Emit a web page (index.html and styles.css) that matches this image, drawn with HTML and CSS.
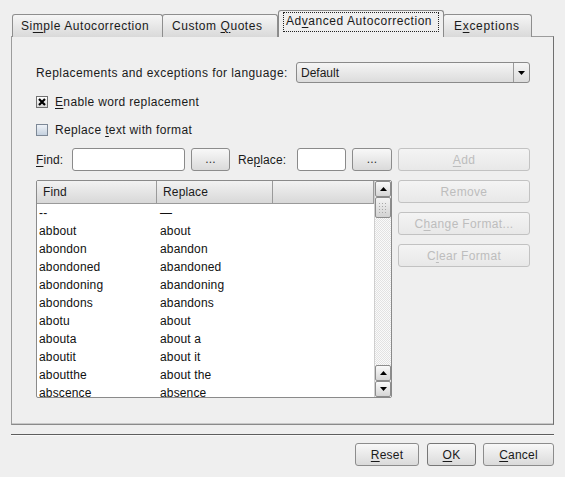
FILE: index.html
```html
<!DOCTYPE html>
<html>
<head>
<meta charset="utf-8">
<link rel="stylesheet" href="styles.css">
</head>
<body>
<div class="dialog">
  <div class="tabs">
    <div class="tab t1"><span>Si<u>m</u>ple Autocorrection</span></div>
    <div class="tab t2"><span>Custom <u>Q</u>uotes</span></div>
    <div class="tab active t3"><span class="focus">Ad<u>v</u>anced Autocorrection</span></div>
    <div class="tab t4"><span>E<u>x</u>ceptions</span></div>
  </div>
  <div class="panel">
    <div class="lang-row">
      <span class="lang-label">Replacements and exceptions for language:</span>
      <div class="combo">
        <span class="combo-text">Default</span>
        <span class="combo-arrow"><svg width="7" height="4" viewBox="0 0 7 4"><path d="M0 0H7L3.5 4Z" fill="#000"/></svg></span>
      </div>
    </div>
    <div class="check">
      <span class="box checked"><svg width="8" height="8" viewBox="0 0 8 8"><path d="M1 1L7 7M7 1L1 7" stroke="#000" stroke-width="2.2"/></svg></span>
      <span class="check-label"><u>E</u>nable word replacement</span>
    </div>
    <div class="check">
      <span class="box"></span>
      <span class="check-label">Replace <u>t</u>ext with format</span>
    </div>
    <div class="grid">
      <div class="find-row">
        <span class="lbl-find"><u>F</u>ind:</span>
        <span class="input in-find"></span>
        <span class="btn dots b1">...</span>
        <span class="lbl-rep">Re<u>p</u>lace:</span>
        <span class="input in-rep"></span>
        <span class="btn dots b2">...</span>
      </div>
      <div class="btn disabled"><span><u>A</u>dd</span></div>
      <div class="list">
        <div class="list-main">
          <div class="head">
            <div class="hc c1">Find</div>
            <div class="hc c2">Replace</div>
            <div class="hc c3"></div>
          </div>
          <div class="rows">
            <div class="row"><span class="c1">--</span><span class="c2">—</span></div>
            <div class="row"><span class="c1">abbout</span><span class="c2">about</span></div>
            <div class="row"><span class="c1">abondon</span><span class="c2">abandon</span></div>
            <div class="row"><span class="c1">abondoned</span><span class="c2">abandoned</span></div>
            <div class="row"><span class="c1">abondoning</span><span class="c2">abandoning</span></div>
            <div class="row"><span class="c1">abondons</span><span class="c2">abandons</span></div>
            <div class="row"><span class="c1">abotu</span><span class="c2">about</span></div>
            <div class="row"><span class="c1">abouta</span><span class="c2">about a</span></div>
            <div class="row"><span class="c1">aboutit</span><span class="c2">about it</span></div>
            <div class="row"><span class="c1">aboutthe</span><span class="c2">about the</span></div>
            <div class="row"><span class="c1">abscence</span><span class="c2">absence</span></div>
          </div>
        </div>
        <div class="scroll">
          <div class="sb-btn"><svg width="7" height="4" viewBox="0 0 7 4"><path d="M3.5 0L7 4H0Z" fill="#000"/></svg></div>
          <div class="sb-thumb"><span class="grip"></span></div>
          <div class="sb-track"></div>
          <div class="sb-btn"><svg width="7" height="4" viewBox="0 0 7 4"><path d="M3.5 0L7 4H0Z" fill="#000"/></svg></div>
          <div class="sb-btn"><svg width="7" height="4" viewBox="0 0 7 4"><path d="M0 0H7L3.5 4Z" fill="#000"/></svg></div>
        </div>
      </div>
      <div class="side">
        <div class="btn disabled"><span>Remove</span></div>
        <div class="btn disabled"><span>C<u>h</u>ange Format...</span></div>
        <div class="btn disabled"><span>C<u>l</u>ear Format</span></div>
      </div>
    </div>
  </div>
  <div class="sep"></div>
  <div class="footer">
    <div class="btn f-reset"><span><u>R</u>eset</span></div>
    <div class="btn f-ok default"><span><u>O</u>K</span></div>
    <div class="btn f-cancel"><span><u>C</u>ancel</span></div>
  </div>
</div>
</body>
</html>
```

FILE: styles.css
```css
* { box-sizing: border-box; }
html, body {
  margin: 0;
  background: #efefef;
}
body {
  width: 565px;
  height: 477px;
  overflow: hidden;
  font-family: "Liberation Sans", Arial, sans-serif;
  font-size: 12px;
  color: #1a1a1a;
  letter-spacing: 0.3px;
}
u { text-decoration: underline; text-underline-offset: 2px; }

.dialog {
  padding: 10px 11px 0 11px;
}

/* Tabs */
.tabs {
  display: flex;
  align-items: flex-end;
  height: 27px;
  padding-left: 1px;
}
.tab {
  height: 23px;
  border: 1px solid #8e8e8e;
  border-bottom: none;
  border-radius: 3px 3px 0 0;
  background: linear-gradient(#f6f6f6, #d9d9d9);
  display: flex;
  align-items: center;
  padding: 0 0 1px 8px;
  white-space: nowrap;
  letter-spacing: 0.55px;
}
.t1 { width: 151px; }
.t2 { width: 116px; margin-left: -1px; padding-left: 9px; }
.t3 { width: 166px; }
.t4 { width: 89px; margin-left: -1px; padding-left: 10px; letter-spacing: 0.7px; }
.tab.active {
  height: 27px;
  background: #efefef;
  position: relative;
  z-index: 1;
  padding: 0 0 4px 4px;
  border-color: #8a8a8a;
}
.focus {
  width: 156px;
  border: 1px dotted #222;
  padding: 2px 2px 3px 2px;
  line-height: 13px;
}

/* Panel */
.panel {
  margin-top: -1px;
  height: 389px;
  border: 1px solid #9c9c9c;
  border-right-color: #6f6f6f;
  border-bottom-color: #8a8a8a;
  box-shadow: inset 0 -1px 0 #c8c8c8;
  padding: 25px 23px 0 24px;
}
.lang-row {
  display: flex;
  align-items: center;
  height: 21px;
  margin-bottom: 5px;
}
.lang-label { letter-spacing: 0.43px; }
.combo {
  margin-left: auto;
  width: 234px;
  height: 21px;
  border: 1px solid #8a8a8a;
  border-radius: 3px;
  background: linear-gradient(#f5f5f5, #dcdcdc);
  display: flex;
  align-items: center;
  letter-spacing: 0;
}
.combo-text {
  flex: 1;
  padding-left: 4px;
}
.combo-arrow {
  width: 16px;
  height: 19px;
  border-left: 1px solid #9a9a9a;
  display: flex;
  align-items: center;
  justify-content: center;
}

.check {
  display: flex;
  align-items: center;
  height: 28px;
}
.check-label { letter-spacing: 0.35px; }
.box {
  width: 12px;
  height: 12px;
  border: 1px solid #7d8896;
  background: linear-gradient(#eef2f7, #c5d1df);
  margin-right: 7px;
  display: flex;
  align-items: center;
  justify-content: center;
}
.box.checked {
  border-color: #707070;
  background: linear-gradient(#ffffff, #d8d8d8);
}

/* grid */
.grid {
  margin-top: 4px;
  display: grid;
  grid-template-columns: 356px 132px;
  column-gap: 6px;
  row-gap: 9px;
  grid-template-rows: 23px 218px;
}
.find-row {
  display: flex;
  align-items: center;
  letter-spacing: 0.1px;
}
.lbl-find { width: 36px; }
.input {
  height: 23px;
  border: 1px solid #8a8a8a;
  border-radius: 3px;
  background: #fff;
}
.in-find { width: 113px; }
.in-rep { width: 49px; }
.b1 { width: 39px; margin-left: 6px; }
.b2 { width: 40px; margin-left: 6px; }
.lbl-rep { width: 59px; margin-left: 8px; }

.btn {
  height: 23px;
  border: 1px solid #8c8c8c;
  border-radius: 3px;
  background: linear-gradient(#f8f8f8, #dadada);
  display: flex;
  align-items: center;
  justify-content: center;
  color: #1a1a1a;
  letter-spacing: 0.2px;
}
.btn.dots { padding-bottom: 2px; color: #333; }
.btn.disabled {
  border-color: #c2c2c2;
  background: linear-gradient(#f4f4f4, #e8e8e8);
  color: #bdbdbd;
  letter-spacing: 0.35px;
}

/* list */
.list {
  border: 1px solid #8a8a8a;
  border-radius: 2px;
  background: #fff;
  display: flex;
  overflow: hidden;
  letter-spacing: 0.15px;
}
.list-main {
  flex: 1;
  overflow: hidden;
}
.head {
  display: flex;
  height: 23px;
  background: linear-gradient(#f2f2f2, #d8d8d8);
  border-bottom: 1px solid #9a9a9a;
}
.hc {
  display: flex;
  align-items: center;
  padding-left: 6px;
  border-right: 1px solid #9a9a9a;
}
.head .c1 { width: 120px; }
.head .c2 { width: 116px; }
.head .c3 { flex: 1; }
.row {
  display: flex;
  height: 18px;
  align-items: center;
  color: #111;
  white-space: nowrap;
}
.row .c1 { width: 120px; padding-left: 2px; }
.row .c2 { padding-left: 3px; }

.scroll {
  width: 17px;
  display: flex;
  flex-direction: column;
  border-left: 1px solid #cfcfcf;
  background: #efefef;
}
.sb-btn {
  height: 16px;
  border: 1px solid #8c8c8c;
  border-radius: 2px;
  background: linear-gradient(#fafafa, #d6d6d6);
  display: flex;
  align-items: center;
  justify-content: center;
}
.sb-thumb {
  height: 21px;
  border: 1px solid #8c8c8c;
  border-radius: 2px;
  background: linear-gradient(#f4f4f4, #d2d2d2);
  display: flex;
  align-items: center;
  justify-content: center;
}
.grip {
  width: 10px;
  height: 11px;
  background-image: radial-gradient(circle, #a8a8a8 0.7px, transparent 0.8px);
  background-size: 3px 3px;
}
.sb-track {
  flex: 1;
  background-color: #f4f4f4;
  background-image: repeating-conic-gradient(#e2e2e2 0 25%, #fafafa 0 50%);
  background-size: 2px 2px;
}

.side {
  display: flex;
  flex-direction: column;
  gap: 9px;
}

/* footer */
.sep {
  margin-top: 9px;
  height: 2px;
  border-top: 1px solid #5e5e5e;
  border-bottom: 1px solid #fafafa;
}
.footer {
  margin-top: 7px;
  display: flex;
  justify-content: flex-end;
}
.f-reset { width: 64px; }
.f-ok { width: 49px; margin-left: 8px; }
.f-cancel { width: 71px; margin-left: 7px; }
.btn.default { border-color: #777; }
```
